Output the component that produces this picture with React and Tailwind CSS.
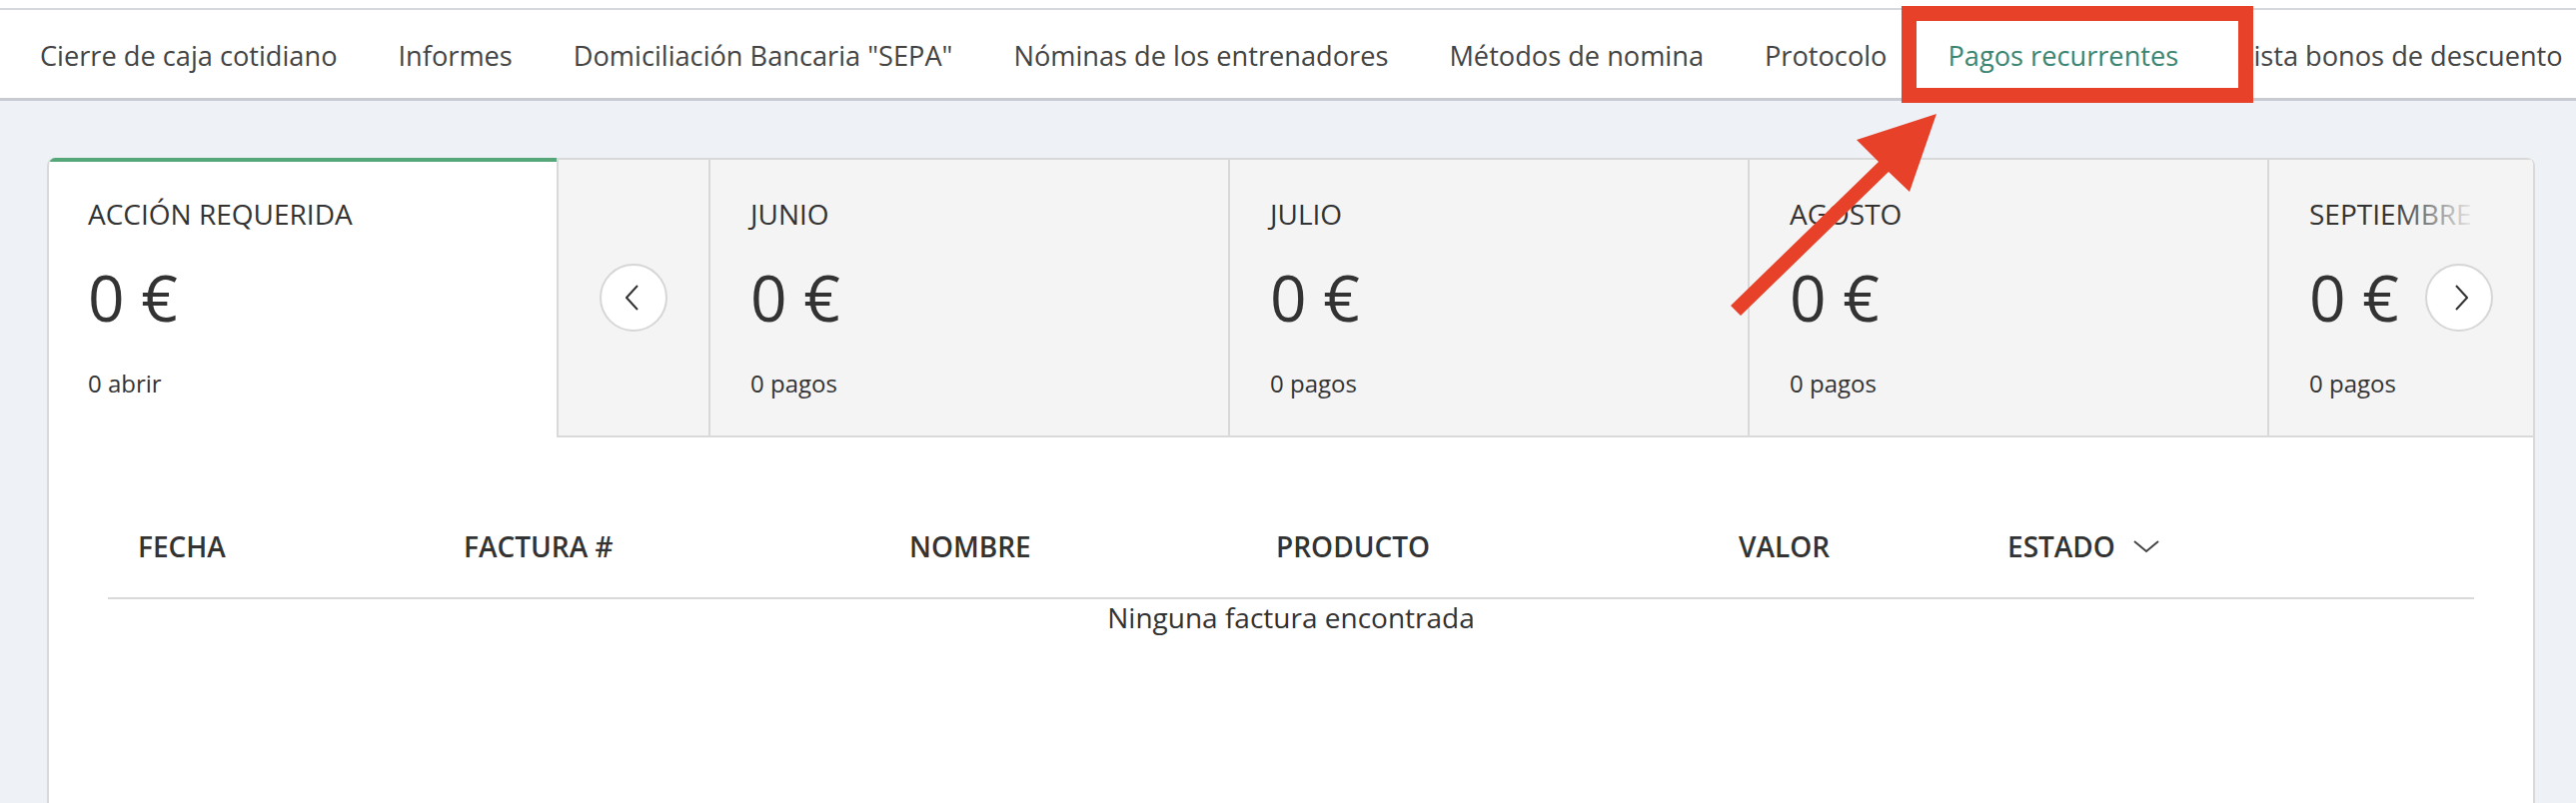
const tabs = [
  "Cierre de caja cotidiano",
  "Informes",
  'Domiciliación Bancaria "SEPA"',
  "Nóminas de los entrenadores",
  "Métodos de nomina",
  "Protocolo",
  "Pagos recurrentes",
  "Lista bonos de descuento",
];

const months = ["JUNIO", "JULIO", "AGOSTO", "SEPTIEMBRE"];

const columns = ["FECHA", "FACTURA #", "NOMBRE", "PRODUCTO", "VALOR", "ESTADO"];

function Chevron({ dir }) {
  return (
    <svg width="14" height="26" viewBox="0 0 14 26" fill="none">
      <polyline
        points={dir === "left" ? "12,1 1,13 12,25" : "2,1 13,13 2,25"}
        stroke="#333"
        strokeWidth="2"
      />
    </svg>
  );
}

function StatBlock({ title, amount, sub }) {
  return (
    <div className="flex flex-col">
      <div className="text-[28px] leading-none text-[#333] whitespace-nowrap">{title}</div>
      <div className="mt-[38px] text-[64px] leading-none text-[#333] whitespace-nowrap">{amount}</div>
      <div className="mt-[42px] text-[24px] leading-none text-[#333] whitespace-nowrap">{sub}</div>
    </div>
  );
}

export default function App() {
  return (
    <div
      className="relative w-[2578px] h-[804px] overflow-hidden bg-[#eef2f6] flex flex-col"
      style={{ fontFamily: '"Open Sans", "Noto Sans", sans-serif' }}
    >
      {/* Top nav */}
      <div className="bg-white pt-[8px] shrink-0">
        <div className="border-t-2 border-b-[3px] border-t-[#d5d8dc] border-b-[#c8ccd2] h-[93px] pt-[4px] flex items-center gap-[61px] pl-[40px] overflow-hidden whitespace-nowrap">
          {tabs.map((t) => (
            <span
              key={t}
              className={`text-[27.2px] leading-none ${
                t === "Pagos recurrentes" ? "text-[#3b8573]" : "text-[#444]"
              }`}
            >
              {t}
            </span>
          ))}
        </div>
      </div>

      {/* Content */}
      <div className="flex-1 pt-[57px] pl-[47px] pr-[41px] flex flex-col min-h-0">
        <div className="flex-1 bg-white border-x-2 border-[#d9d9d9] rounded-t-[8px] overflow-hidden flex flex-col">
          {/* Summary row */}
          <div className="flex h-[280px] shrink-0">
            <div className="w-[508px] shrink-0 border-t-4 border-[#55a678] pl-[39px] pt-[38px]">
              <StatBlock title="ACCIÓN REQUERIDA" amount="0 €" sub="0 abrir" />
            </div>
            <div className="relative flex-1 flex bg-[#f4f4f4] border-l-2 border-y-2 border-[#d9d9d9] overflow-hidden">
              <div className="w-[150px] shrink-0 flex items-center justify-center">
                <button className="w-[68px] h-[68px] rounded-full border-2 border-[#d6d6d6] bg-white flex items-center justify-center pr-[3px]">
                  <Chevron dir="left" />
                </button>
              </div>
              {months.map((m) => (
                <div
                  key={m}
                  className="w-[520px] shrink-0 border-l-2 border-[#d9d9d9] pl-[40px] pt-[40px]"
                >
                  <StatBlock title={m} amount="0 €" sub="0 pagos" />
                </div>
              ))}
              <div className="absolute right-0 top-0 bottom-0 w-[140px] bg-gradient-to-r from-[#f4f4f4]/0 to-[#f4f4f4] to-60%" />
              <button className="absolute right-[40px] top-1/2 -translate-y-1/2 w-[68px] h-[68px] rounded-full border-2 border-[#d6d6d6] bg-white flex items-center justify-center pl-[3px]">
                <Chevron dir="right" />
              </button>
            </div>
          </div>

          {/* Table */}
          <div className="px-[59px]">
            <div className="grid grid-cols-[326px_446px_367px_463px_269px_1fr] border-b-2 border-[#d9d9d9] pt-[95px] pb-[37px]">
              {columns.map((c) => (
                <div
                  key={c}
                  className="pl-[30px] text-[28px] leading-none font-semibold text-[#333] flex items-center gap-[18px] whitespace-nowrap"
                >
                  {c}
                  {c === "ESTADO" && (
                    <svg width="26" height="14" viewBox="0 0 26 14" fill="none">
                      <polyline points="1,2 13,12 25,2" stroke="#444" strokeWidth="2" />
                    </svg>
                  )}
                </div>
              ))}
            </div>
            <div className="pt-[4px] text-center text-[28px] leading-none text-[#333]">
              Ninguna factura encontrada
            </div>
          </div>
        </div>
      </div>

      {/* Annotation: red box */}
      <div className="absolute left-[1903px] top-[6px] w-[352px] h-[97px] border-[15px] border-[#e8412a]" />

      {/* Annotation: arrow */}
      <svg className="absolute left-0 top-0 pointer-events-none" width="2578" height="804">
        <polygon
          points="1938,114 1858,140 1880,162 1732,306 1742,316 1890,172 1911,192"
          fill="#e8412a"
        />
      </svg>
    </div>
  );
}
